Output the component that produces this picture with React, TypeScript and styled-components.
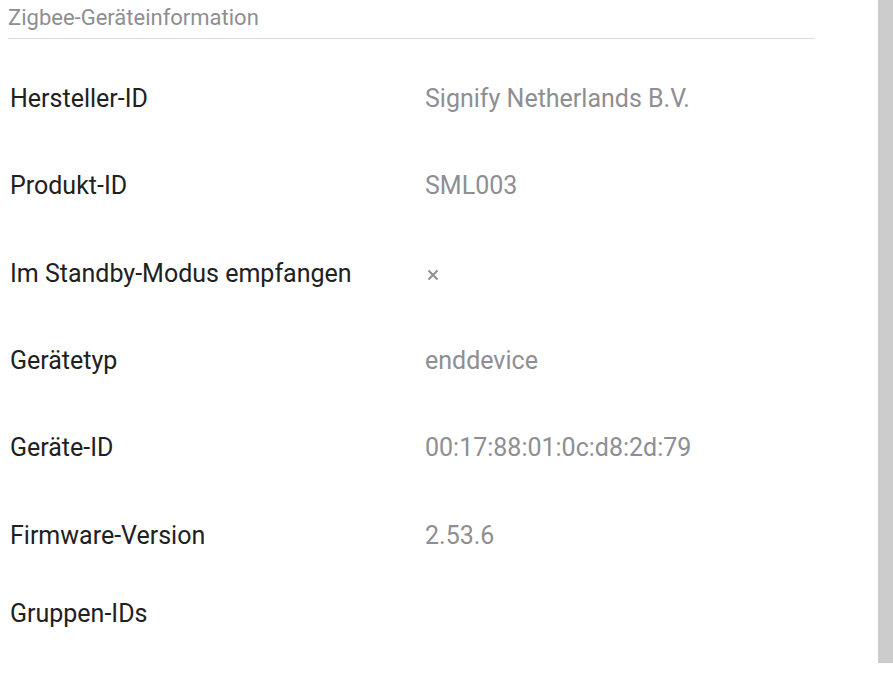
import React from 'react';
import styled, { createGlobalStyle } from 'styled-components';

const GlobalStyle = createGlobalStyle`
  html, body {
    margin: 0;
    padding: 0;
    background: #ffffff;
    font-family: Roboto, "Liberation Sans", sans-serif;
    overflow: hidden;
  }
`;

type Info = { label: string; value?: string; cross?: boolean };

const rows: Info[] = [
  { label: 'Hersteller-ID', value: 'Signify Netherlands B.V.' },
  { label: 'Produkt-ID', value: 'SML003' },
  { label: 'Im Standby-Modus empfangen', cross: true },
  { label: 'Gerätetyp', value: 'enddevice' },
  { label: 'Geräte-ID', value: '00:17:88:01:0c:d8:2d:79' },
  { label: 'Firmware-Version', value: '2.53.6' },
  { label: 'Gruppen-IDs' },
];

const App: React.FC = () => {
  return (
    <Page>
      <GlobalStyle />
      <Content>
        <Heading>Zigbee-Geräteinformation</Heading>
        <List>
          {rows.map((row) => (
            <Row key={row.label} $empty={!row.value && !row.cross}>
              <Label>{row.label}</Label>
              {row.cross ? (
                <Value>
                  <Cross width="12" height="12" viewBox="0 0 12 12">
                    <path
                      d="M1.5 1.5 L10.5 10.5 M10.5 1.5 L1.5 10.5"
                      stroke="#8e8e93"
                      strokeWidth="2"
                    />
                  </Cross>
                </Value>
              ) : (
                <Value>{row.value}</Value>
              )}
            </Row>
          ))}
        </List>
      </Content>
      <ScrollTrack />
    </Page>
  );
};

const Page = styled.div`
  display: flex;
  width: 893px;
  height: 674px;
`;

const Content = styled.div`
  flex: 1;
  padding: 0 0 0 8px;
`;

const Heading = styled.div`
  width: 807px;
  height: 39px;
  box-sizing: border-box;
  padding-top: 5px;
  border-bottom: 1px solid #dcdce1;
  font-size: 22px;
  color: #8e8e93;
`;

const List = styled.div`
  display: flex;
  flex-direction: column;
  padding-top: 16px;
`;

const Row = styled.div<{ $empty: boolean }>`
  display: grid;
  grid-template-columns: 415px 1fr;
  align-items: center;
  height: ${(p) => (p.$empty ? 69 : 87.33)}px;
  padding-left: 2px;
`;

const Label = styled.div`
  font-size: 25px;
  color: #212121;
`;

const Value = styled.div`
  font-size: 25px;
  color: #8e8e93;
  display: flex;
  align-items: center;
`;

const Cross = styled.svg`
  margin-left: 2px;
  margin-top: 4px;
`;

const ScrollTrack = styled.div`
  width: 15px;
  height: 663px;
  background: #cccccc;
  flex-shrink: 0;
`;

export default App;
